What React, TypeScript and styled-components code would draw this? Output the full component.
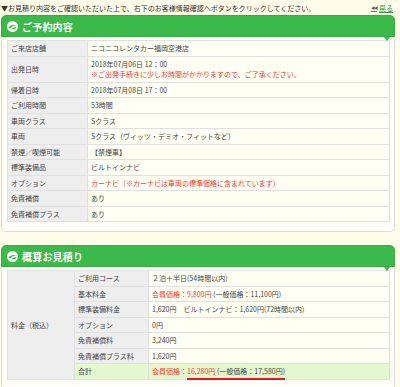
import React from "react";
import styled, { createGlobalStyle } from "styled-components";

const GlobalStyle = createGlobalStyle`
  html, body { margin: 0; padding: 0; }
  body {
    background: #fffcea;
    font-family: "Noto Sans CJK JP", "Noto Sans", sans-serif;
    color: #444;
  }
`;

const Page = styled.div`
  width: 394px;
  padding: 0 5px 0 1px;
`;

const TopBar = styled.div`
  height: 15px;
  display: flex;
  align-items: center;
  justify-content: space-between;
  font-size: 7px;
  color: #333;
`;

const Back = styled.a`
  display: flex;
  align-items: center;
  gap: 2px;
  margin-right: 2px;
  color: #2f9a3a;
  font-size: 7px;
  text-decoration: underline;
`;

const BackArrow = styled.span`
  font-size: 4px;
  color: #555;
  letter-spacing: -1px;
`;

const Section = styled.section`
  margin-bottom: 13px;
`;

const Header = styled.div`
  position: relative;
  height: 22px;
  box-sizing: border-box;
  background: #3bb94a;
  border: 1px solid #34ad43;
  border-radius: 5px 5px 0 0;
  display: flex;
  align-items: center;
  gap: 4px;
  padding-left: 5px;
  &::after {
    content: "";
    position: absolute;
    right: 4px;
    bottom: -5px;
    border-left: 3px solid transparent;
    border-right: 3px solid transparent;
    border-top: 4px solid #3bb94a;
  }
`;

const Title = styled.h2`
  margin: 0;
  color: #fff;
  font-size: 10px;
  font-weight: bold;
  letter-spacing: 0.2px;
`;

const Box = styled.div`
  background: #fffef8;
  border: 1px solid #dcdcdc;
  border-top: none;
  border-radius: 0 0 5px 5px;
  padding: 3px 4px 9px 5px;
`;

const Table = styled.table`
  width: 100%;
  border-collapse: collapse;
  font-size: 7px;
  line-height: 10.5px;
  table-layout: fixed;
`;

const Label = styled.th<{ $w?: number; $green?: boolean }>`
  width: ${(p) => (p.$w ? `${p.$w}px` : "auto")};
  background: ${(p) => (p.$green ? "#e4f8cf" : "#eeeeee")};
  border: 1px solid #e0e0e0;
  text-align: left;
  font-weight: normal;
  color: #444;
  padding: 2px 3px;
  vertical-align: middle;
`;

const Value = styled.td<{ $green?: boolean }>`
  background: ${(p) => (p.$green ? "#e4f8cf" : "#fffff3")};
  border: 1px solid #e0e0e0;
  color: #444;
  padding: 2px 3px;
  white-space: nowrap;
`;

const Red = styled.span`
  color: #ff3b30;
`;

const Underlined = styled.span`
  padding-bottom: 4px;
  background-image: linear-gradient(#e8141e, #e8141e);
  background-repeat: no-repeat;
  background-position: 0 100%;
  background-size: 100% 2px;
`;

const Icon = () => (
  <svg width="11" height="11" viewBox="0 0 12 12">
    <circle cx="6" cy="6" r="6" fill="#fff" />
    <path d="M1.6 7.6 C3 4.2 7.6 3.4 10.6 5.4 C8 4.8 5.6 5.4 4.4 7.8 Z" fill="#3bb94a" />
    <path d="M5.4 8.6 C6.6 6.8 8.6 6.4 10.4 7 C9.4 8.8 7.2 9.6 5.4 8.6 Z" fill="#3bb94a" />
  </svg>
);

const reservation: [string, React.ReactNode][] = [
  ["ご来店店舗", "ニコニコレンタカー福岡空港店"],
  [
    "出発日時",
    <>
      2018年07月06日 12：00
      <br />
      <Red>※ご出発手続きに少しお時間がかかりますので、ご了承ください。</Red>
    </>,
  ],
  ["帰着日時", "2018年07月08日 17：00"],
  ["ご利用時間", "53時間"],
  ["車両クラス", "Sクラス"],
  ["車両", "Sクラス（ヴィッツ・デミオ・フィットなど）"],
  ["禁煙／喫煙可能", "【禁煙車】"],
  ["標準装備品", "ビルトインナビ"],
  ["オプション", <Red>カーナビ（※カーナビは車両の標準価格に含まれています）</Red>],
  ["免責補償", "あり"],
  ["免責補償プラス", "あり"],
];

const estimate: [string, React.ReactNode][] = [
  ["ご利用コース", "２泊＋半日(54時間以内)"],
  [
    "基本料金",
    <>
      <Red>会員価格：9,800円</Red> (一般価格：11,100円)
    </>,
  ],
  ["標準装備料金", "1,620円　ビルトインナビ：1,620円(72時間以内)"],
  ["オプション", "0円"],
  ["免責補償料", "3,240円"],
  ["免責補償プラス料", "1,620円"],
];

export default function App() {
  return (
    <>
      <GlobalStyle />
      <Page>
        <TopBar>
          <span>▼お見積り内容をご確認いただいた上で、右下のお客様情報確認へボタンをクリックしてください。</span>
          <Back>
            <BackArrow>◀◀</BackArrow>戻る
          </Back>
        </TopBar>

        <Section>
          <Header>
            <Icon />
            <Title>ご予約内容</Title>
          </Header>
          <Box>
            <Table>
              <tbody>
                {reservation.map(([k, v]) => (
                  <tr key={k}>
                    <Label $w={73}>{k}</Label>
                    <Value>{v}</Value>
                  </tr>
                ))}
              </tbody>
            </Table>
          </Box>
        </Section>

        <Section>
          <Header>
            <Icon />
            <Title>概算お見積り</Title>
          </Header>
          <Box>
            <Table>
              <tbody>
                {estimate.map(([k, v], i) => (
                  <tr key={k}>
                    {i === 0 && (
                      <Label $w={60} rowSpan={7}>
                        料金（税込）
                      </Label>
                    )}
                    <Label $w={67}>{k}</Label>
                    <Value>{v}</Value>
                  </tr>
                ))}
                <tr>
                  <Label $w={67} $green>
                    合計
                  </Label>
                  <Value $green>
                    <Red>会員価格：</Red>
                    <Underlined>
                      <Red>16,280円</Red> (一般価格：17,580円)
                    </Underlined>
                  </Value>
                </tr>
              </tbody>
            </Table>
          </Box>
        </Section>
      </Page>
    </>
  );
}
